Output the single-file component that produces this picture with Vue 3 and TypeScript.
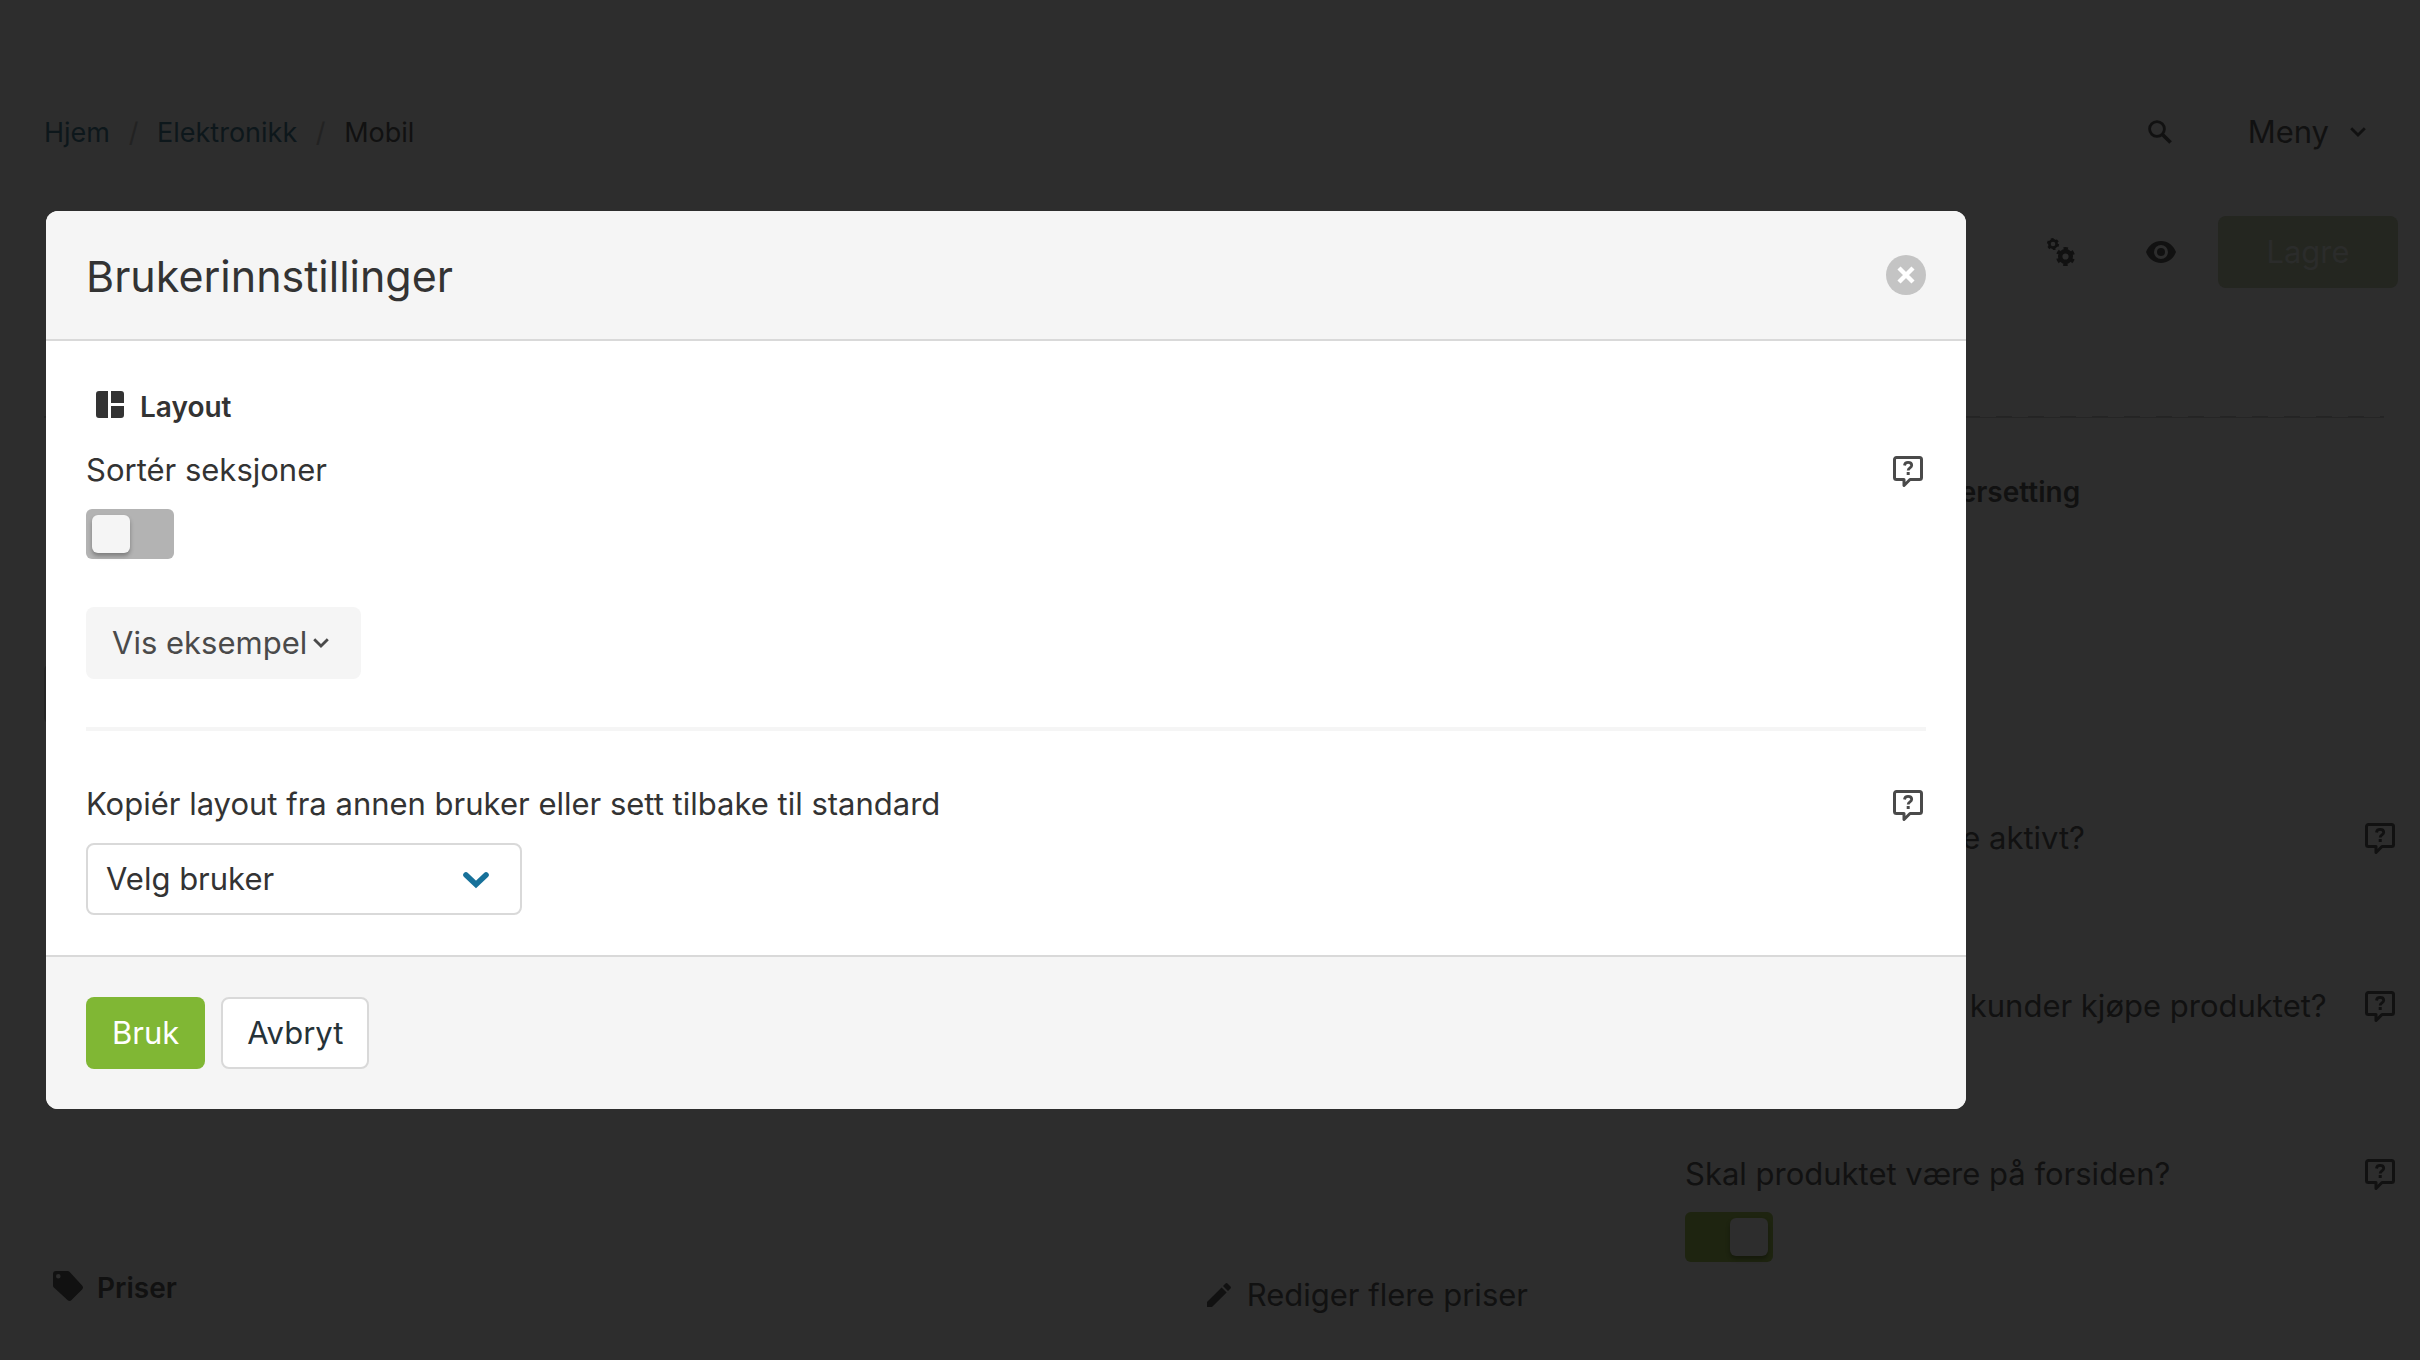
<script setup lang="ts">
import { ref } from 'vue'

interface Question {
  id: string
  label: string
  on: boolean
}

const sortSections = ref(false)
const selectedUser = ref('')
const productName = ref('')
const questions = ref<Question[]>([
  { id: 'active', label: 'Skal produktet være aktivt?', on: true },
  { id: 'buy', label: 'Kan alle registrerte kunder kjøpe produktet?', on: true },
  { id: 'front', label: 'Skal produktet være på forsiden?', on: true },
])
</script>

<template>
  <div class="screen">
    <svg class="sprite" aria-hidden="true">
      <symbol id="i-help" viewBox="0 0 30 31">
        <path d="M3.500 1.500h23a2 2 0 0 1 2 2v18a2 2 0 0 1-2 2H17l-6 6v-6H3.500a2 2 0 0 1-2-2v-18a2 2 0 0 1 2-2z" fill="none" stroke="currentColor" stroke-width="3" stroke-linejoin="round" />
        <path d="M11.500 9.500c.2-2.200 1.600-3.200 3.600-3.200s3.600 1.200 3.600 3c0 2.600-3.500 2.500-3.500 5.200" fill="none" stroke="currentColor" stroke-width="2.800" />
        <rect x="13.700" y="16" width="3" height="3" fill="currentColor" />
      </symbol>
      <symbol id="i-chevron" viewBox="0 0 16 10">
        <path d="M1.200 1.200 8 8l6.800-6.800" fill="none" stroke="currentColor" stroke-width="2.800" />
      </symbol>
    </svg>

    <div class="page">
      <header class="topbar">
        <nav class="crumbs" aria-label="Brødsmuler">
          <a href="#">Hjem</a><span class="sep">/</span><a href="#">Elektronikk</a><span class="sep">/</span><span>Mobil</span>
        </nav>
        <div class="topactions">
          <button class="icon-btn" aria-label="Søk">
            <svg width="24" height="24" viewBox="0 0 24 24"><circle cx="9" cy="9" r="7.400" fill="none" stroke="currentColor" stroke-width="2.800" /><path d="M14.200 14.200l8.400 8.400" stroke="currentColor" stroke-width="3.600" /></svg>
          </button>
          <button class="menu-btn">Meny <svg width="16" height="10"><use href="#i-chevron" /></svg></button>
        </div>
      </header>

      <div class="toolbar">
        <button class="icon-btn" aria-label="Innstillinger">
          <svg width="30" height="30" viewBox="0 0 30 30" fill="none" stroke="currentColor">
            <circle cx="7" cy="7" r="3.600" stroke-width="2.600" />
            <circle cx="7" cy="7" r="5.200" stroke-width="1.800" stroke-dasharray="2.700 2.745" />
            <circle cx="19.500" cy="19.500" r="5.300" stroke-width="4.400" />
            <circle cx="19.500" cy="19.500" r="8.100" stroke-width="2.800" stroke-dasharray="4.240 4.240" stroke-dashoffset="2.120" transform="rotate(30 19.500 19.500)" />
          </svg>
        </button>
        <button class="icon-btn" aria-label="Forhåndsvis">
          <svg width="30" height="22" viewBox="0 0 30 22"><path fill="currentColor" fill-rule="evenodd" d="M15 0C8.200 0 2.400 4.500 0 11c2.400 6.500 8.200 11 15 11s12.600-4.500 15-11C27.600 4.500 21.800 0 15 0zm0 18a7 7 0 1 1 0-14 7 7 0 0 1 0 14zm0-11a4 4 0 1 0 0 8 4 4 0 0 0 0-8z" /></svg>
        </button>
        <button class="save">Lagre</button>
      </div>

      <hr class="dashed">

      <div class="columns">
        <section class="main-col">
          <input v-model="productName" class="name-field" type="text" aria-label="Navn">
          <div class="prices">
            <h2><svg width="30" height="34" viewBox="0 0 30 34"><path fill="currentColor" fill-rule="evenodd" d="M3 0h11.500c.9 0 1.600.3 2.200.9l12.400 13.600c1.200 1.200 1.200 2.800 0 4L18.500 29.100c-1.200 1.200-2.800 1.200-4 0L.9 16.500C.3 15.900 0 15.200 0 14.400V3a3 3 0 0 1 3-3zm2.300 3a2.300 2.300 0 1 0 0 4.600 2.300 2.300 0 0 0 0-4.600z" /></svg>Priser</h2>
            <button class="edit"><svg width="24" height="24" viewBox="0 0 24 24"><path fill="currentColor" d="M0 19v5h5L19.600 9.400l-5-5zM23.500 5.500a1.500 1.500 0 0 0 0-2L20.500.5a1.500 1.500 0 0 0-2 0l-2.500 2.500 5 5z" /></svg>Rediger flere priser</button>
          </div>
        </section>
        <aside class="side-col">
          <h2>Synlighet og oversetting</h2>
          <div v-for="q in questions" :key="q.id" class="question">
            <div class="label-row">
              <label :for="q.id">{{ q.label }}</label>
              <button class="help" aria-label="Hjelp"><svg width="30" height="31"><use href="#i-help" /></svg></button>
            </div>
            <input :id="q.id" v-model="q.on" class="toggle" type="checkbox">
          </div>
        </aside>
      </div>
    </div>

    <div class="overlay">
      <div class="modal" role="dialog" aria-modal="true" aria-labelledby="dialog-title">
        <header class="modal-head">
          <h1 id="dialog-title">Brukerinnstillinger</h1>
          <button class="close" aria-label="Lukk">
            <svg width="18" height="18" viewBox="0 0 18 18"><path d="M2 2l14 14M16 2L2 16" stroke="currentColor" stroke-width="4.400" /></svg>
          </button>
        </header>
        <div class="modal-body">
          <h2 class="section-title">
            <svg width="28" height="32" viewBox="0 0 28 32" fill="currentColor"><path d="M3 0h9v27H3a3 3 0 0 1-3-3V3a3 3 0 0 1 3-3zM15 0h10a3 3 0 0 1 3 3v9H15zM15 15h13v9a3 3 0 0 1-3 3H15z" /></svg>Layout
          </h2>
          <div class="label-row">
            <label for="sort">Sortér seksjoner</label>
            <button class="help" aria-label="Hjelp"><svg width="30" height="31"><use href="#i-help" /></svg></button>
          </div>
          <input id="sort" v-model="sortSections" class="toggle" type="checkbox">
          <button class="btn example">Vis eksempel<svg width="16" height="10"><use href="#i-chevron" /></svg></button>
          <hr class="divider">
          <div class="label-row">
            <label for="user">Kopiér layout fra annen bruker eller sett tilbake til standard</label>
            <button class="help" aria-label="Hjelp"><svg width="30" height="31"><use href="#i-help" /></svg></button>
          </div>
          <div class="select">
            <select id="user" v-model="selectedUser"><option value="">Velg bruker</option></select>
            <svg width="26" height="18" viewBox="0 0 26 18"><path d="M3 4 13 13.500 23 4" fill="none" stroke="currentColor" stroke-width="5.600" stroke-linecap="round" /></svg>
          </div>
        </div>
        <footer class="modal-foot">
          <button class="btn primary">Bruk</button>
          <button class="btn outline">Avbryt</button>
        </footer>
      </div>
    </div>
  </div>
</template>

<style>
body {
  margin: 0;
  background: #2d2d2d;
}
</style>

<style scoped>
* {
  box-sizing: border-box;
}
.screen {
  position: relative;
  min-height: 100vh;
  overflow: hidden;
  font: 400 31px/40px Inter, "Liberation Sans", sans-serif;
  color: #111;
}
.sprite {
  position: absolute;
  width: 0;
  height: 0;
}
button,
select {
  margin: 0;
  padding: 0;
  border: 0;
  background: none;
  font: inherit;
  color: inherit;
}
h1,
h2 {
  margin: 0;
  line-height: 40px;
}
h2 {
  font-size: 28px;
  font-weight: 600;
}
svg {
  display: block;
  flex: none;
}
.page {
  padding: 112px 22px 0 44px;
}
.topbar,
.topactions,
.crumbs,
.toolbar,
.label-row,
.modal-head,
.modal-foot,
.menu-btn,
.edit,
h2 {
  display: flex;
  align-items: center;
}
.topbar {
  justify-content: space-between;
  height: 40px;
}
.crumbs {
  padding-top: 2px;
  font-size: 27px;
}
.crumbs a {
  color: #0d171b;
  text-decoration: none;
}
.sep {
  width: 47px;
  text-align: center;
  color: #222;
}
.topactions {
  gap: 76px;
  padding-right: 32px;
}
.menu-btn {
  gap: 21px;
}
.toolbar {
  justify-content: flex-end;
  margin-top: 64px;
  height: 72px;
}
.toolbar .icon-btn {
  margin-right: 70px;
}
.toolbar .icon-btn + .icon-btn {
  margin-right: 42px;
}
.save {
  width: 180px;
  height: 72px;
  border-radius: 8px;
  background: #242620;
  color: #2b2c2b;
}
.dashed {
  height: 2px;
  margin: 128px 14px 0 0;
  border: 0;
  background:
    repeating-linear-gradient(90deg, #242424 0 16px, transparent 16px 32px) 0 0 / 100% 1px no-repeat,
    linear-gradient(#252525, #252525) 0 1px / 100% 1px no-repeat;
}
.columns {
  display: flex;
  justify-content: space-between;
  padding-top: 54px;
}
.main-col {
  width: 1484px;
  padding-top: 191px;
}
.name-field {
  display: block;
  width: 100%;
  height: 62px;
  margin: 0 0 543px;
  border: 2px solid #242424;
  border-radius: 8px;
  background: #2a2a2a;
}
.prices {
  display: flex;
  align-items: flex-start;
  justify-content: space-between;
}
.prices h2 {
  gap: 14px;
  padding-left: 9px;
}
.edit {
  gap: 16px;
  height: 54px;
}
.side-col {
  width: 713px;
}
.side-col h2 {
  padding-left: 66px;
  margin-bottom: 306px;
}
.question {
  height: 168px;
}
.label-row {
  justify-content: space-between;
  height: 40px;
}
.modal-body label {
  padding-bottom: 2px;
}
.label-row .help {
  margin-right: 3px;
}
.toggle {
  appearance: none;
  display: block;
  width: 88px;
  height: 50px;
  margin: 18px 0 0;
  padding: 6px;
  border-radius: 6px;
  background: #b3b3b3;
}
.toggle::before {
  content: "";
  display: block;
  width: 38px;
  height: 38px;
  border-radius: 6px;
  background: #f5f5f5;
  box-shadow: 0 3px 4px rgba(0, 0, 0, 0.3);
}
.question .toggle {
  background: #1e2410;
}
.question .toggle::before {
  margin-left: 39px;
  background: #2d2d2d;
}
.overlay {
  position: absolute;
  inset: 0;
  padding: 211px 454px 0 46px;
}
.modal {
  overflow: hidden;
  border-radius: 12px;
  background: #fff;
  color: #333;
}
.modal-head {
  justify-content: space-between;
  height: 130px;
  padding: 0 40px;
  border-bottom: 2px solid #d9d9d9;
  background: #f5f5f5;
}
.modal-head h1 {
  padding-top: 2px;
  font-size: 43px;
  font-weight: 400;
}
.close {
  display: grid;
  place-items: center;
  width: 40px;
  height: 40px;
  border-radius: 50%;
  background: #c4c4c4;
  color: #fff;
}
.modal-body {
  padding: 46px 40px 40px;
}
.modal-body .help {
  color: #4a4a4a;
}
.section-title {
  gap: 16px;
  padding-left: 10px;
  margin-bottom: 24px;
}
.btn {
  height: 72px;
  border-radius: 8px;
}
.example {
  display: flex;
  align-items: center;
  gap: 6px;
  margin-top: 48px;
  padding: 0 32px 0 26px;
  background: #f5f5f5;
  color: #4a4a4a;
}
.divider {
  height: 4px;
  margin: 48px 0 54px;
  border: 0;
  background: #f5f5f5;
}
.select {
  position: relative;
  width: 436px;
  margin-top: 18px;
}
.select select {
  appearance: none;
  display: block;
  width: 100%;
  height: 72px;
  padding: 0 18px;
  border: 2px solid #d9d9d9;
  border-radius: 8px;
  background: #fff;
}
.select svg {
  position: absolute;
  right: 33px;
  top: 28px;
  color: #17719a;
  pointer-events: none;
}
.modal-foot {
  gap: 16px;
  padding: 40px;
  border-top: 2px solid #d9d9d9;
  background: #f5f5f5;
}
.primary {
  padding: 0 26px;
  background: #80b734;
  color: #fff;
}
.outline {
  padding: 0 24px;
  border: 2px solid #d9d9d9;
  background: #fff;
  color: #263238;
}
</style>
